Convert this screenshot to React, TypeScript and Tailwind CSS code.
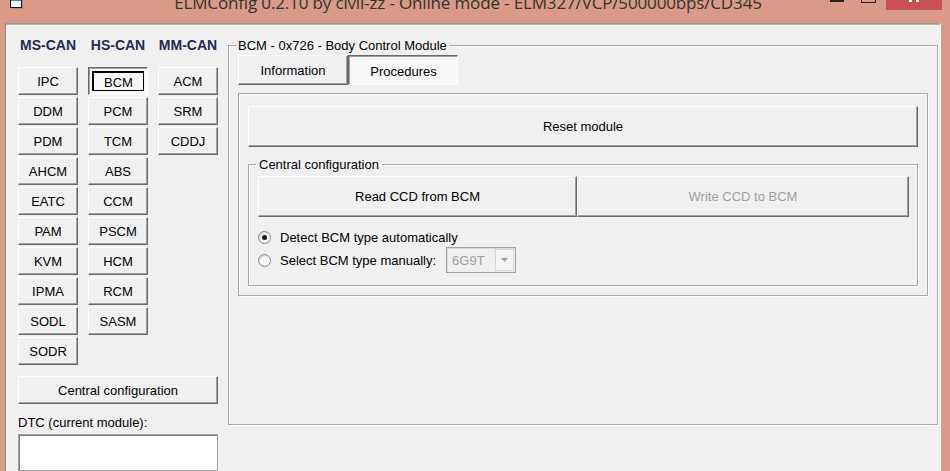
import React from "react";

const msCan = ["IPC", "DDM", "PDM", "AHCM", "EATC", "PAM", "KVM", "IPMA", "SODL", "SODR"];
const hsCan = ["BCM", "PCM", "TCM", "ABS", "CCM", "PSCM", "HCM", "RCM", "SASM"];
const mmCan = ["ACM", "SRM", "CDDJ"];

const raised =
  "border border-t-white border-l-white border-r-[#696969] border-b-[#696969] bg-[#f0f0f0] shadow-[inset_-1px_-1px_0_#a0a0a0]";
const pressed =
  "border border-t-[#696969] border-l-[#696969] border-r-white border-b-white shadow-[inset_1px_1px_0_#a0a0a0] bg-[repeating-conic-gradient(#ffffff_0_25%,#f0f0f0_0_50%)] bg-[length:2px_2px]";

function WinButton({
  label,
  className = "",
  disabled = false,
}: {
  label: string;
  className?: string;
  disabled?: boolean;
}) {
  return (
    <button
      className={`${raised} flex items-center justify-center text-[13px] leading-[15px] ${
        disabled ? "text-[#a0a0a0]" : "text-black"
      } ${className}`}
    >
      {label}
    </button>
  );
}

function ModuleColumn({ items, active }: { items: string[]; active?: string }) {
  return (
    <div className="flex w-[60px] flex-col gap-[2px]">
      {items.map((m) =>
        m === active ? (
          <button
            key={m}
            className={`${pressed} flex h-[28px] items-center justify-center p-[3px]`}
          >
            <span className="flex h-full w-full items-center justify-center border border-black pl-[1px] pt-[2px] text-[13px] leading-[15px] text-black shadow-[inset_1px_1px_0_#000]">
              {m}
            </span>
          </button>
        ) : (
          <WinButton key={m} label={m} className="h-[28px]" />
        )
      )}
    </div>
  );
}

function Radio({ checked, label }: { checked?: boolean; label: string }) {
  return (
    <label className="flex items-center">
      <span className="flex h-[13px] w-[13px] items-center justify-center rounded-full border border-[#8a8a8a] bg-[#f7f7f7] shadow-[inset_1px_1px_1px_#d0d0d0]">
        {checked && <span className="h-[5px] w-[5px] rounded-full bg-[#1a1a1a]" />}
      </span>
      <span className="ml-[9px] text-[13px] leading-[15px] text-black">{label}</span>
    </label>
  );
}

export default function App() {
  return (
    <div className="flex h-[471px] w-[950px] flex-col overflow-hidden bg-[#d99a88] font-['Liberation_Sans',Arial,sans-serif]">
      {/* title bar */}
      <div className="flex h-[23px] shrink-0 items-start overflow-hidden">
        <div className="w-[120px] pl-[10px]">
          <svg width="14" height="10" viewBox="0 0 14 10">
            <rect x="2.5" y="-1.5" width="10" height="10" fill="#555" opacity="0.5" />
            <rect x="0.5" y="-3.5" width="11" height="11" fill="#fff" stroke="#111" />
            <rect x="1" y="-3" width="10" height="4" fill="#1c9c9c" />
          </svg>
        </div>
        <div className="mt-[-7px] flex-1 whitespace-nowrap pr-[14px] text-center font-['Open_Sans',sans-serif] text-[17px] leading-[20px] tracking-[-0.15px] text-[#333]">
          ELMConfig 0.2.10 by civil-zz - Online mode - ELM327/VCP/500000bps/CD345
        </div>
        <div className="flex w-[120px] items-start">
          <span className="h-[2px] w-[14px] bg-[#222]" />
          <span className="ml-[17px] h-[3px] w-[15px] border-x border-b border-[#222]" />
          <span className="ml-[10px] flex h-[10px] w-[56px] justify-center bg-[#c75050]">
            <svg width="14" height="3" viewBox="0 0 14 3">
              <rect x="2" y="0" width="3" height="2" fill="#fff" />
              <rect x="9" y="0" width="3" height="2" fill="#fff" />
            </svg>
          </span>
        </div>
      </div>

      {/* client area */}
      <div className="ml-[5px] flex h-[448px] w-[936px] border-l border-t border-r border-l-[#8c8c8c] border-t-[#9a9a9a] border-r-white bg-[#f0f0f0] pl-[12px] shadow-[inset_0_1px_0_#b5b5b5]">
        {/* module list */}
        <div className="flex w-[200px] flex-col pt-[13px]">
          <div className="flex gap-[10px] text-[14px] font-bold leading-[16px] text-[#1f2a58]">
            <div className="w-[60px] text-center">MS-CAN</div>
            <div className="w-[60px] text-center">HS-CAN</div>
            <div className="w-[60px] text-center">MM-CAN</div>
          </div>
          <div className="mt-[14px] flex items-start gap-[10px]">
            <ModuleColumn items={msCan} />
            <ModuleColumn items={hsCan} active="BCM" />
            <ModuleColumn items={mmCan} />
          </div>
          <WinButton label="Central configuration" className="mt-[11px] h-[31px] w-[200px]" />
          <div className="mt-[11px] text-[13px] leading-[15px] text-black">DTC (current module):</div>
          <div className="mt-[4px] h-[40px] w-[200px] border border-[#a0a0a0] bg-white shadow-[inset_1px_1px_0_#7a7a7a]" />
        </div>

        {/* module details */}
        <fieldset className="ml-[10px] mt-[14px] h-fit w-[710px] border border-[#a8a8a8] px-[9px] shadow-[inset_1px_1px_0_#fff,1px_1px_0_#fff]">
          <legend className="ml-[-2px] px-[2px] text-[13px] leading-[15px] text-black">
            BCM - 0x726 - Body Control Module
          </legend>
          <div className="flex h-[371px] flex-col">
            <div className="mt-[2px] flex">
              <WinButton label="Information" className="h-[30px] w-[110px]" />
              <button
                className={`${pressed} flex h-[30px] w-[110px] items-center justify-center pl-[1px] pt-[2px] text-[13px] leading-[15px] text-black`}
              >
                Procedures
              </button>
            </div>

            <div className="mt-[8px] h-[203px] w-[690px] border border-[#a8a8a8] px-[9px] pt-[12px] shadow-[inset_1px_1px_0_#fff,1px_1px_0_#fff]">
              <WinButton label="Reset module" className="h-[41px] w-full" />

              <fieldset className="mt-[10px] border border-[#a8a8a8] pb-[12px] pl-[9px] pr-[8px] shadow-[inset_1px_1px_0_#fff,1px_1px_0_#fff]">
                <legend className="ml-[-2px] px-[3px] text-[13px] leading-[15px] text-black">
                  Central configuration
                </legend>
                <div className="mt-[4px] flex">
                  <WinButton label="Read CCD from BCM" className="h-[41px] w-[319px]" />
                  <WinButton label="Write CCD to BCM" disabled className="h-[41px] w-[332px]" />
                </div>
                <div className="mt-[12px] flex h-[16px] items-center">
                  <Radio checked label="Detect BCM type automatically" />
                </div>
                <div className="mt-[2px] flex h-[26px] items-center">
                  <Radio label="Select BCM type manually:" />
                  <div className="ml-[10px] flex h-[26px] w-[70px] items-center border border-[#a0a0a0] bg-[#f0f0f0] shadow-[inset_1px_1px_0_#dcdcdc]">
                    <span className="flex-1 pl-[5px] text-[13px] leading-[15px] text-[#a0a0a0]">6G9T</span>
                    <span className="mr-[1px] flex h-[22px] w-[19px] items-center justify-center border border-[#d6d6d6] bg-[#f4f4f4]">
                      <svg width="7" height="4" viewBox="0 0 7 4">
                        <path d="M0 0h7L3.5 4z" fill="#a0a0a0" />
                      </svg>
                    </span>
                  </div>
                </div>
              </fieldset>
            </div>
          </div>
        </fieldset>
      </div>
    </div>
  );
}
